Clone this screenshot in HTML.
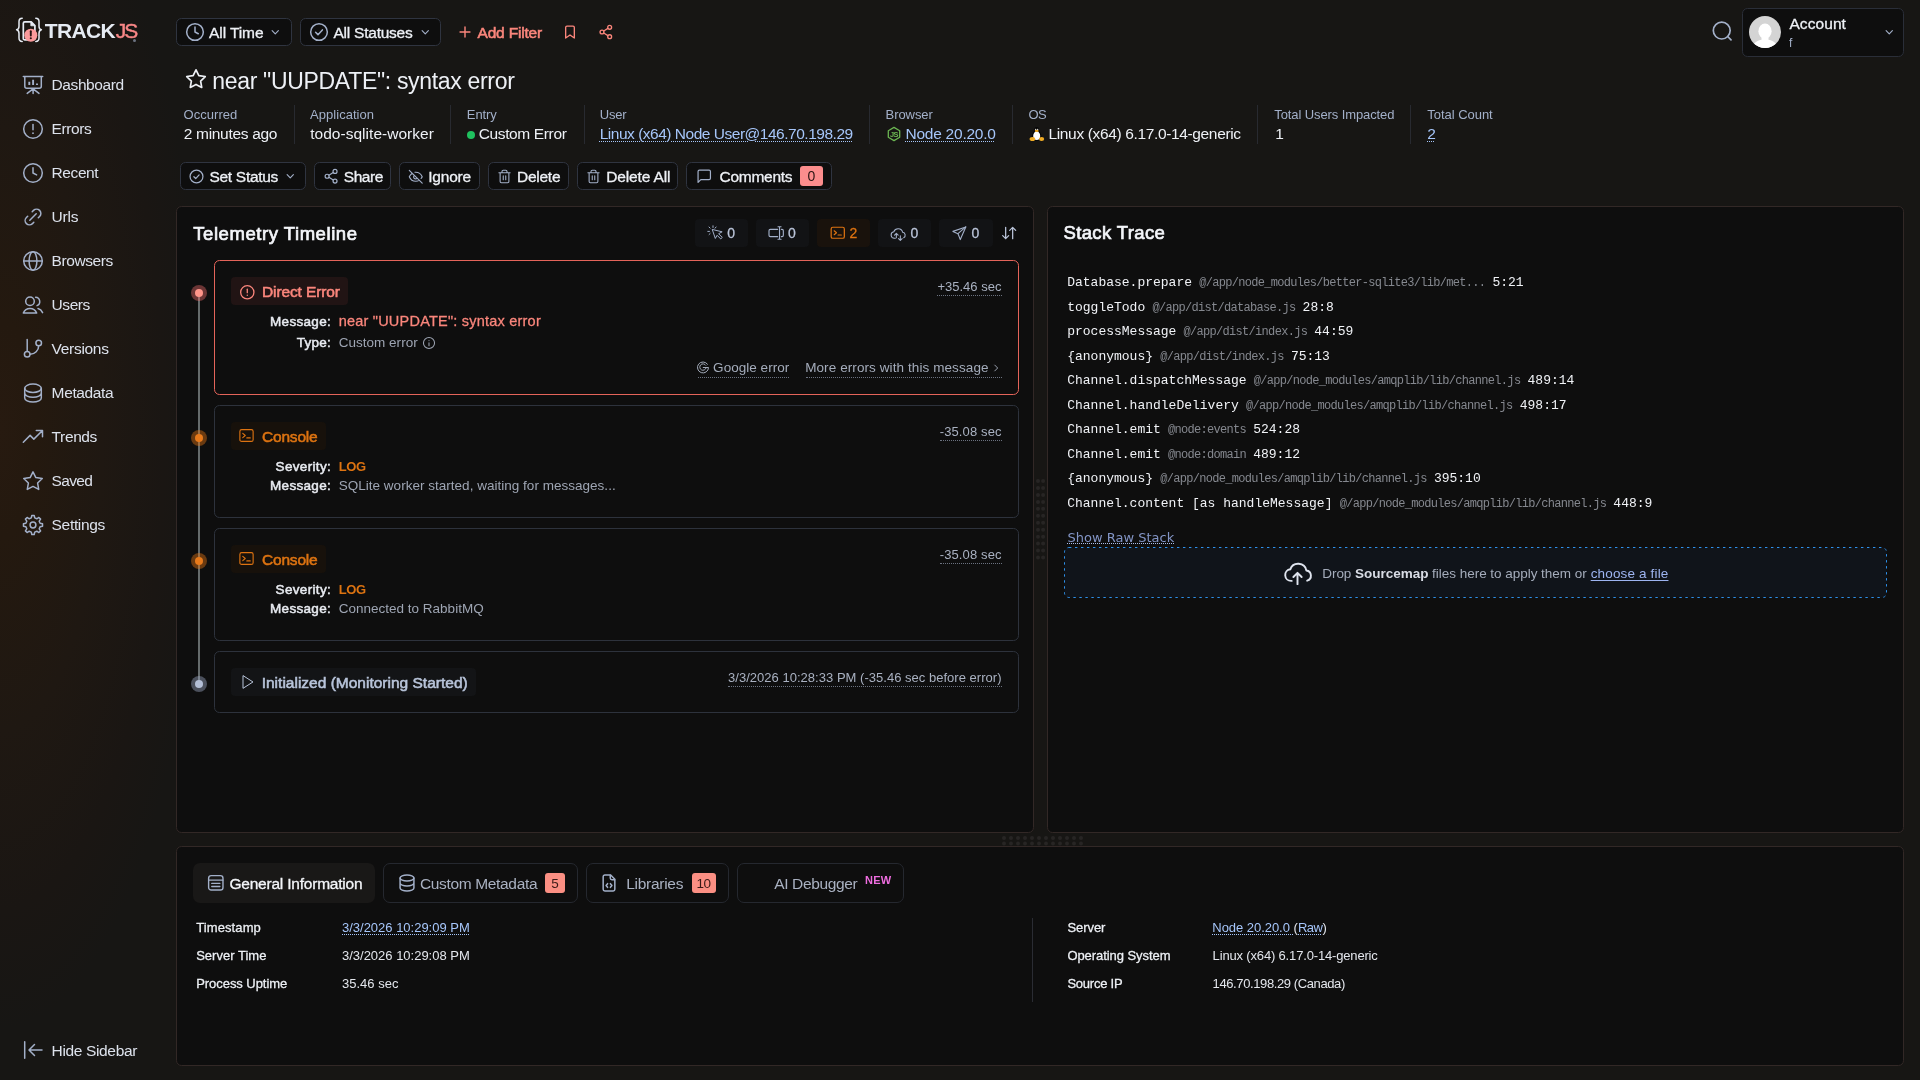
<!DOCTYPE html>
<html lang="en">
<head>
<meta charset="utf-8">
<title>near "UUPDATE": syntax error - TrackJS</title>
<style>
*{box-sizing:border-box;margin:0;padding:0}
html,body{width:1920px;height:1080px;overflow:hidden}
body{background:#171614;color:#eef1f6;font-family:"Liberation Sans",sans-serif;font-size:15px;position:relative}
#bg{position:absolute;left:0;top:0;width:1920px;height:1080px;background:radial-gradient(ellipse 205px 600px at 0px 430px,#271a10 0%,#24190f 18%,#1f1812 50%,#1a1613 80%,#171614 100%)}
.abs{position:absolute}
.t{position:absolute;white-space:nowrap}
svg{display:block;position:absolute;overflow:visible}
.ic{fill:none;stroke:currentColor;stroke-linecap:round;stroke-linejoin:round}
.btn{position:absolute;border:1px solid #2f3440;background:#0e0e0e;border-radius:5.5px}
.du{text-decoration:underline dotted;text-decoration-thickness:1px;text-underline-offset:2px}
.vdiv{position:absolute;width:1px;background:#282a30}
.panel{position:absolute;background:#0e0e0e;border:1px solid #322826;border-radius:5.5px}
.card{position:absolute;border:1px solid #2d323c;border-radius:5.5px}
.chip{position:absolute;border-radius:4px;background:#141518}
</style>
</head>
<body>
<div id="bg"></div>
<div id="app" style="position:absolute;left:0;top:0;width:1920px;height:1080px;will-change:transform">
<nav aria-label="Sidebar">
<svg style="left:14px;top:15px" width="32" height="30" viewBox="0 0 32 30" fill="none" stroke-linecap="round" stroke-linejoin="round"><path d="M8.2 3.2C5.6 3.2 5 4.6 5 6.6v4.6c0 2-.8 3.2-2.4 3.6C4.2 15.200 5 16.400 5 18.400V23c0 2 .6 3.400 3.200 3.400" stroke="#e6ebf3" stroke-width="1.5"/><path d="M21.800 3.2c2.600 0 3.200 1.400 3.200 3.400v4.600c0 2 .8 3.200 2.400 3.600-1.600.4-2.400 1.600-2.400 3.600V23c0 2-.6 3.400-3.200 3.400" stroke="#e6ebf3" stroke-width="1.5"/><path d="M9.300 23.400V8.300a1.500 1.500 0 0 1 1.500-1.500h6.400l3.700 3.700v12.900a1.500 1.500 0 0 1-1.500 1.500H10.800a1.500 1.500 0 0 1-1.500-1.500z" stroke="#e6ebf3" stroke-width="1.700"/><path d="M16.800 7v3.800h3.900z" fill="#e6ebf3" stroke="#e6ebf3" stroke-width=".8"/><circle cx="16.800" cy="20.200" r="6.500" fill="#fb9a9b"/><path d="M16.800 16.200v4.300" stroke="#2a1513" stroke-width="1.900"/><circle cx="16.800" cy="23.300" r="1.050" fill="#2a1513"/></svg>
<span class="t" style="font-size:21px;line-height:23px;color:#e6ebf3;top:19px;font-weight:bold;letter-spacing:-0.640px;left:44.70px;">TRACK</span>
<span class="t" style="font-size:21px;line-height:23px;color:#f98787;top:19px;-webkit-text-stroke:0.42px currentColor;letter-spacing:-2.008px;left:115.80px;">JS</span>
<div class="abs" style="left:132.6px;top:38.6px;width:3px;height:3px;border-radius:50%;background:#6b7280"></div>
<span class="t" style="font-size:15.5px;line-height:17px;color:#dde2ec;top:76px;letter-spacing:-0.414px;left:51.60px;">Dashboard</span>
<span class="t" style="font-size:15.5px;line-height:17px;color:#dde2ec;top:120px;letter-spacing:-0.401px;left:51.60px;">Errors</span>
<span class="t" style="font-size:15.5px;line-height:17px;color:#dde2ec;top:164px;letter-spacing:-0.421px;left:51.60px;">Recent</span>
<span class="t" style="font-size:15.5px;line-height:17px;color:#dde2ec;top:208px;letter-spacing:-0.216px;left:51.60px;">Urls</span>
<span class="t" style="font-size:15.5px;line-height:17px;color:#dde2ec;top:252px;letter-spacing:-0.414px;left:51.60px;">Browsers</span>
<span class="t" style="font-size:15.5px;line-height:17px;color:#dde2ec;top:296px;letter-spacing:-0.437px;left:51.60px;">Users</span>
<span class="t" style="font-size:15.5px;line-height:17px;color:#dde2ec;top:340px;letter-spacing:-0.307px;left:51.60px;">Versions</span>
<span class="t" style="font-size:15.5px;line-height:17px;color:#dde2ec;top:384px;letter-spacing:-0.368px;left:51.60px;">Metadata</span>
<span class="t" style="font-size:15.5px;line-height:17px;color:#dde2ec;top:428px;letter-spacing:-0.379px;left:51.60px;">Trends</span>
<span class="t" style="font-size:15.5px;line-height:17px;color:#dde2ec;top:472px;letter-spacing:-0.671px;left:51.60px;">Saved</span>
<span class="t" style="font-size:15.5px;line-height:17px;color:#dde2ec;top:516px;letter-spacing:-0.327px;left:51.60px;">Settings</span>
<span class="t" style="font-size:15.5px;line-height:17px;color:#dde2ec;top:1042px;letter-spacing:-0.351px;left:51.60px;">Hide Sidebar</span>
<svg class="ic" style="left:21px;top:72.6px;color:#a3b0c9;stroke-width:1.5" width="24" height="24" viewBox="0 0 24 24"><path d="M2.300 3.600h19.400M3.800 3.600v9.700a2 2 0 0 0 2 2h12.500a2 2 0 0 0 2-2V3.600M12.100 15.300v5.200M12.100 15.800l-5.900 4.600M12.100 15.800l5.900 4.600"/><path d="M8.300 8.800v3.200M12.100 6.800v5.200M16 10.600v1.400" stroke-width="1.900" stroke-linecap="butt"/></svg>
<svg class="ic" style="left:21px;top:116.6px;color:#a3b0c9;stroke-width:1.5" width="24" height="24" viewBox="0 0 24 24"><circle cx="12" cy="12" r="9.300"/><path d="M12 7.500v5.300"/><circle cx="12" cy="16.200" r=".9" fill="currentColor" stroke="none"/></svg>
<svg class="ic" style="left:21px;top:160.6px;color:#a3b0c9;stroke-width:1.5" width="24" height="24" viewBox="0 0 24 24"><circle cx="12" cy="12" r="9.300"/><path d="M12 6.800V12l3.600 1.900"/></svg>
<svg class="ic" style="left:21px;top:204.6px;color:#a3b0c9;stroke-width:1.5" width="24" height="24" viewBox="0 0 24 24"><path d="M8.800 15.200l6.400-6.400M11.200 6.700l1.300-1.300a4.300 4.300 0 0 1 6.100 6.100l-1.300 1.300M12.800 17.300l-1.300 1.300a4.300 4.300 0 0 1-6.100-6.100l1.300-1.300"/></svg>
<svg class="ic" style="left:21px;top:248.6px;color:#a3b0c9;stroke-width:1.5" width="24" height="24" viewBox="0 0 24 24"><circle cx="12" cy="12" r="9.300"/><path d="M2.700 12h18.600"/><ellipse cx="12" cy="12" rx="3.900" ry="9.300"/></svg>
<svg class="ic" style="left:21px;top:292.6px;color:#a3b0c9;stroke-width:1.5" width="24" height="24" viewBox="0 0 24 24"><circle cx="9" cy="8.300" r="4.300"/><path d="M2.300 20c1.300-3 3.800-4.600 6.700-4.600s5.400 1.600 6.700 4.600zM14.600 4.300a4.300 4.300 0 0 1 1.400 8.300M17 15.600c2 .5 3.600 1.900 4.600 4"/></svg>
<svg class="ic" style="left:21px;top:336.6px;color:#a3b0c9;stroke-width:1.5" width="24" height="24" viewBox="0 0 24 24"><path d="M6.200 2.500v11.800"/><circle cx="6.200" cy="17.300" r="2.800"/><circle cx="17.700" cy="6" r="2.800"/><path d="M17.700 8.800c0 4.700-3.800 8.500-8.600 8.500"/></svg>
<svg class="ic" style="left:21px;top:380.6px;color:#a3b0c9;stroke-width:1.5" width="24" height="24" viewBox="0 0 24 24"><ellipse cx="12" cy="7.300" rx="8.300" ry="4.200"/><path d="M3.700 7.300v9.600c0 2.300 3.700 4.200 8.300 4.200s8.300-1.900 8.300-4.200V7.300M3.700 12.100c0 2.300 3.700 4.200 8.300 4.200s8.300-1.900 8.300-4.200"/></svg>
<svg class="ic" style="left:21px;top:424.6px;color:#a3b0c9;stroke-width:1.5" width="24" height="24" viewBox="0 0 24 24"><path d="M2.300 17.200l6.800-6.800 3.700 3.700 8.700-8.600M15.300 5.500h6.200v6.200"/></svg>
<svg class="ic" style="left:21px;top:468.6px;color:#a3b0c9;stroke-width:1.5" width="24" height="24" viewBox="0 0 24 24"><path d="M12 2.800l2.850 5.800 6.400.93-4.630 4.500 1.100 6.370L12 17.400l-5.720 3 1.100-6.370-4.630-4.500 6.400-.93z"/></svg>
<svg class="ic" style="left:21px;top:512.6px;color:#a3b0c9;stroke-width:1.5" width="24" height="24" viewBox="0 0 24 24"><path d="M10.30 4.90 L10.80 2.48 L13.20 2.48 L13.70 4.90 L15.81 5.78 L17.88 4.41 L19.59 6.12 L18.22 8.19 L19.10 10.30 L21.52 10.80 L21.52 13.20 L19.10 13.70 L18.22 15.81 L19.59 17.88 L17.88 19.59 L15.81 18.22 L13.70 19.10 L13.20 21.52 L10.80 21.52 L10.30 19.10 L8.19 18.22 L6.12 19.59 L4.41 17.88 L5.78 15.81 L4.90 13.70 L2.48 13.20 L2.48 10.80 L4.90 10.30 L5.78 8.19 L4.41 6.12 L6.12 4.41 L8.19 5.78z"/><circle cx="12" cy="12" r="2.900"/></svg>
<svg class="ic" style="left:21px;top:1038px;color:#a3b0c9;stroke-width:1.5" width="24" height="24" viewBox="0 0 24 24"><path d="M3.700 3.800v16.400M21 12H8.500M13.500 6.500L8 12l5.500 5.500"/></svg>
</nav>
<header aria-label="Filters">
<div class="btn" style="left:176px;top:18px;width:116px;height:28px"></div>
<svg class="ic" style="left:183.6px;top:21px;color:#a3b0c9;stroke-width:1.65" width="22" height="22" viewBox="0 0 24 24"><circle cx="12" cy="12" r="9.100"/><path d="M12 6.500V12l3.600 1.900"/></svg>
<span class="t" style="font-size:15.5px;line-height:17px;color:#eef1f6;top:24px;-webkit-text-stroke:0.31px currentColor;letter-spacing:-0.078px;left:209.00px;">All Time</span>
<svg class="ic" style="left:269px;top:26px;color:#a3b0c9;stroke-width:2.2" width="12.5" height="12.5" viewBox="0 0 24 24"><path d="M6 9l6 6 6-6"/></svg>
<div class="btn" style="left:300px;top:18px;width:141px;height:28px"></div>
<svg class="ic" style="left:308px;top:21px;color:#a3b0c9;stroke-width:1.65" width="22" height="22" viewBox="0 0 24 24"><circle cx="12" cy="12" r="9.100"/><path d="M8.300 12.300l2.600 2.600 4.800-5.200"/></svg>
<span class="t" style="font-size:15.5px;line-height:17px;color:#eef1f6;top:24px;-webkit-text-stroke:0.31px currentColor;letter-spacing:-0.238px;left:333.50px;">All Statuses</span>
<svg class="ic" style="left:418.5px;top:26px;color:#a3b0c9;stroke-width:2.2" width="12.5" height="12.5" viewBox="0 0 24 24"><path d="M6 9l6 6 6-6"/></svg>
<svg class="ic" style="left:458px;top:25px;color:#fb867c;stroke-width:2.4" width="14" height="14" viewBox="0 0 24 24"><path d="M12 3.500v17M3.500 12h17"/></svg>
<span class="t" style="font-size:15.5px;line-height:17px;color:#fb867c;top:24px;-webkit-text-stroke:0.57px currentColor;letter-spacing:-0.184px;left:477.50px;">Add Filter</span>
<svg class="ic" style="left:562px;top:24px;color:#fb867c;stroke-width:2" width="16" height="16" viewBox="0 0 24 24"><path d="M18.500 21l-6.500-4.600L5.500 21V5.200a2 2 0 0 1 2-2h9a2 2 0 0 1 2 2z"/></svg>
<svg class="ic" style="left:597.5px;top:24px;color:#fb867c;stroke-width:2" width="16" height="16" viewBox="0 0 24 24"><circle cx="17.500" cy="5" r="2.900"/><circle cx="6" cy="12" r="2.900"/><circle cx="17.500" cy="19" r="2.900"/><path d="M8.600 13.500l6.300 3.900M14.900 6.600l-6.300 3.900"/></svg>
<svg class="ic" style="left:1710.5px;top:19.5px;color:#a3b0c9;stroke-width:1.75" width="23" height="23" viewBox="0 0 24 24"><circle cx="11.200" cy="11" r="8.800"/><path d="M20.900 20.700l-3.500-3.500"/></svg>
<div class="btn" style="left:1742px;top:8px;width:162px;height:49px;border-color:#2a2e38"></div>
<svg style="left:1749px;top:16px" width="32" height="32" viewBox="0 0 32 32"><defs><clipPath id="av"><circle cx="16" cy="16" r="16"/></clipPath></defs><circle cx="16" cy="16" r="16" fill="#d4d4d4"/><g clip-path="url(#av)" fill="#ffffff"><ellipse cx="16" cy="15.200" rx="6.600" ry="7.600"/><path d="M12.500 20h7v4.500h-7z"/><path d="M3.500 33c0-6 5-9.500 12.500-9.500S28.500 27 28.500 33z"/></g></svg>
<span class="t" style="font-size:15.5px;line-height:17px;color:#eef1f6;top:15px;-webkit-text-stroke:0.31px currentColor;letter-spacing:0.083px;left:1789.40px;">Account</span>
<span class="t" style="font-size:12px;line-height:14px;color:#a3b0c9;top:36px;left:1789.00px;">f</span>
<svg class="ic" style="left:1883px;top:26px;color:#a3b0c9;stroke-width:2.2" width="12.5" height="12.5" viewBox="0 0 24 24"><path d="M6 9l6 6 6-6"/></svg>
</header>
<main>
<section aria-label="Error summary">
<svg class="ic" style="left:183.5px;top:66.7px;color:#eef1f6;stroke-width:1.7" width="24" height="24" viewBox="0 0 24 24"><path d="M12 2.800l2.850 5.800 6.400.93-4.630 4.500 1.100 6.370L12 17.400l-5.720 3 1.100-6.370-4.630-4.500 6.400-.93z"/></svg>
<span class="t" style="font-size:23px;line-height:26px;color:#eef1f6;top:68px;letter-spacing:-0.318px;left:212.25px;">near "UUPDATE": syntax error</span>
<span class="t" style="font-size:13px;line-height:15px;color:#a3b0c9;top:107px;letter-spacing:0.035px;left:183.55px;">Occurred</span>
<span class="t" style="font-size:15.5px;line-height:17px;color:#eef1f6;top:125px;letter-spacing:-0.298px;left:183.70px;">2 minutes ago</span>
<span class="t" style="font-size:13px;line-height:15px;color:#a3b0c9;top:107px;letter-spacing:0.036px;left:310.05px;">Application</span>
<span class="t" style="font-size:15.5px;line-height:17px;color:#eef1f6;top:125px;letter-spacing:0.031px;left:310.20px;">todo-sqlite-worker</span>
<span class="t" style="font-size:13px;line-height:15px;color:#a3b0c9;top:107px;letter-spacing:-0.069px;left:466.80px;">Entry</span>
<span class="t" style="font-size:15.5px;line-height:17px;color:#eef1f6;top:125px;letter-spacing:-0.367px;left:478.70px;">Custom Error</span>
<div class="abs" style="left:467px;top:131px;width:8px;height:8px;border-radius:50%;background:#1fc15e"></div>
<span class="t" style="font-size:13px;line-height:15px;color:#a3b0c9;top:107px;letter-spacing:-0.238px;left:599.80px;">User</span>
<span class="t du" style="font-size:15.5px;line-height:17px;color:#a6c6fa;top:125px;letter-spacing:-0.484px;left:599.70px;">Linux (x64) Node User@146.70.198.29</span>
<span class="t" style="font-size:13px;line-height:15px;color:#a3b0c9;top:107px;letter-spacing:-0.062px;left:885.55px;">Browser</span>
<span class="t du" style="font-size:15.5px;line-height:17px;color:#a6c6fa;top:125px;letter-spacing:-0.236px;left:905.45px;">Node 20.20.0</span>
<span class="t" style="font-size:13px;line-height:15px;color:#a3b0c9;top:107px;letter-spacing:-0.773px;left:1028.55px;">OS</span>
<span class="t" style="font-size:15.5px;line-height:17px;color:#eef1f6;top:125px;letter-spacing:-0.355px;left:1048.50px;">Linux (x64) 6.17.0-14-generic</span>
<span class="t" style="font-size:13px;line-height:15px;color:#a3b0c9;top:107px;letter-spacing:-0.105px;left:1274.30px;">Total Users Impacted</span>
<span class="t" style="font-size:15.5px;line-height:17px;color:#eef1f6;top:125px;left:1275.20px;">1</span>
<span class="t" style="font-size:13px;line-height:15px;color:#a3b0c9;top:107px;letter-spacing:-0.033px;left:1427.30px;">Total Count</span>
<span class="t du" style="font-size:15.5px;line-height:17px;color:#a6c6fa;top:125px;left:1427.20px;">2</span>
<div class="vdiv" style="left:294px;top:105px;height:39px"></div>
<div class="vdiv" style="left:450px;top:105px;height:39px"></div>
<div class="vdiv" style="left:584px;top:105px;height:39px"></div>
<div class="vdiv" style="left:869px;top:105px;height:39px"></div>
<div class="vdiv" style="left:1012px;top:105px;height:39px"></div>
<div class="vdiv" style="left:1257px;top:105px;height:39px"></div>
<div class="vdiv" style="left:1410px;top:105px;height:39px"></div>
<svg style="left:886px;top:126px" width="16" height="16" viewBox="0 0 16 16"><path d="M8 1.400l5.700 3.300v6.600L8 14.600 2.300 11.300V4.700z" fill="none" stroke="#6cb652" stroke-width="1.300" stroke-linejoin="round"/><text x="3.900" y="10.900" font-family="Liberation Sans, sans-serif" font-size="7.400" font-weight="bold" letter-spacing="-.5" fill="#6cb652">JS</text></svg>
<svg style="left:1028px;top:126px" width="18" height="16" viewBox="0 0 18 16"><path d="M8.700 1c1.600 0 2.400 1.300 2.400 2.900 0 1.500 2.600 4.400 2.600 7.200 0 2.300-2 3.700-5 3.700s-5-1.400-5-3.700c0-2.800 2.600-5.700 2.600-7.200C6.300 2.300 7.100 1 8.700 1z" fill="#060606"/><ellipse cx="8.700" cy="10" rx="3.500" ry="3.900" fill="#ffffff"/><ellipse cx="8.700" cy="6.800" rx="2.200" ry="1.600" fill="#ffffff"/><ellipse cx="8.700" cy="4.900" rx="2" ry="1.150" fill="#eaa51e"/><circle cx="7.700" cy="3.300" r=".65" fill="#fff"/><circle cx="9.700" cy="3.300" r=".65" fill="#fff"/><ellipse cx="4.400" cy="13" rx="2.800" ry="2.100" fill="#f0ac25"/><ellipse cx="13.600" cy="13" rx="2.600" ry="2" fill="#f0ac25"/></svg>
<div class="btn" style="left:180px;top:162px;width:126px;height:28px"></div>
<svg class="ic" style="left:188.4px;top:167.7px;color:#a3b0c9;stroke-width:1.75" width="17" height="17" viewBox="0 0 24 24"><circle cx="12" cy="12" r="9.100"/><path d="M8.300 12.300l2.600 2.600 4.800-5.200"/></svg>
<span class="t" style="font-size:15.5px;line-height:17px;color:#eef1f6;top:168px;-webkit-text-stroke:0.31px currentColor;letter-spacing:-0.302px;left:209.50px;">Set Status</span>
<svg class="ic" style="left:283.5px;top:170px;color:#a3b0c9;stroke-width:2.2" width="12.5" height="12.5" viewBox="0 0 24 24"><path d="M6 9l6 6 6-6"/></svg>
<div class="btn" style="left:314px;top:162px;width:77px;height:28px"></div>
<svg class="ic" style="left:323px;top:168px;color:#a3b0c9;stroke-width:1.75" width="16.5" height="16.5" viewBox="0 0 24 24"><circle cx="17.500" cy="5" r="2.900"/><circle cx="6" cy="12" r="2.900"/><circle cx="17.500" cy="19" r="2.900"/><path d="M8.600 13.500l6.300 3.900M14.900 6.600l-6.300 3.900"/></svg>
<span class="t" style="font-size:15.5px;line-height:17px;color:#eef1f6;top:168px;-webkit-text-stroke:0.31px currentColor;letter-spacing:-0.425px;left:343.75px;">Share</span>
<div class="btn" style="left:399px;top:162px;width:81px;height:28px"></div>
<svg class="ic" style="left:408px;top:168.5px;color:#a3b0c9;stroke-width:1.75" width="15.5" height="15.5" viewBox="0 0 24 24"><path d="M9.900 9.900a3 3 0 1 0 4.200 4.200M10.700 5.100A10.400 10.400 0 0 1 12 5c7 0 10 7 10 7a13.200 13.200 0 0 1-1.700 2.700M6.600 6.600A13.500 13.500 0 0 0 2 12s3 7 10 7a9.700 9.700 0 0 0 5.400-1.600M2 2l20 20"/></svg>
<span class="t" style="font-size:15.5px;line-height:17px;color:#eef1f6;top:168px;-webkit-text-stroke:0.31px currentColor;letter-spacing:-0.201px;left:428.25px;">Ignore</span>
<div class="btn" style="left:488px;top:162px;width:81px;height:28px"></div>
<svg class="ic" style="left:496.75px;top:168.75px;color:#a3b0c9;stroke-width:1.75" width="15" height="15" viewBox="0 0 24 24"><path d="M3 6h18M19 6v14c0 1-1 2-2 2H7c-1 0-2-1-2-2V6M8 6V4c0-1 1-2 2-2h4c1 0 2 1 2 2v2M10 11v6M14 11v6"/></svg>
<span class="t" style="font-size:15.5px;line-height:17px;color:#eef1f6;top:168px;-webkit-text-stroke:0.31px currentColor;letter-spacing:-0.260px;left:517.00px;">Delete</span>
<div class="btn" style="left:577px;top:162px;width:101px;height:28px"></div>
<svg class="ic" style="left:586px;top:168.75px;color:#a3b0c9;stroke-width:1.75" width="15" height="15" viewBox="0 0 24 24"><path d="M3 6h18M19 6v14c0 1-1 2-2 2H7c-1 0-2-1-2-2V6M8 6V4c0-1 1-2 2-2h4c1 0 2 1 2 2v2M10 11v6M14 11v6"/></svg>
<span class="t" style="font-size:15.5px;line-height:17px;color:#eef1f6;top:168px;-webkit-text-stroke:0.31px currentColor;letter-spacing:-0.148px;left:606.25px;">Delete All</span>
<div class="btn" style="left:686px;top:162px;width:146px;height:28px"></div>
<svg class="ic" style="left:695.5px;top:168px;color:#a3b0c9;stroke-width:1.75" width="16.5" height="16.5" viewBox="0 0 24 24"><path d="M21 15a2 2 0 0 1-2 2H7l-4 4V5a2 2 0 0 1 2-2h14a2 2 0 0 1 2 2z"/></svg>
<span class="t" style="font-size:15.5px;line-height:17px;color:#eef1f6;top:168px;-webkit-text-stroke:0.31px currentColor;letter-spacing:-0.273px;left:719.50px;">Comments</span>
<div class="abs" style="left:800px;top:166px;width:23px;height:20px;border-radius:3px;background:#fb8d8d"></div>
<span class="t" style="font-size:14px;line-height:16px;color:#2a1513;top:168px;left:807.50px;">0</span>
</section>
<svg style="left:1035.9px;top:479.2px" width="9" height="80" fill="#272524"><circle cx="2.0" cy="2.0" r="2"/><circle cx="7.1" cy="2.0" r="2"/><circle cx="2.0" cy="9.0" r="2"/><circle cx="7.1" cy="9.0" r="2"/><circle cx="2.0" cy="15.9" r="2"/><circle cx="7.1" cy="15.9" r="2"/><circle cx="2.0" cy="22.9" r="2"/><circle cx="7.1" cy="22.9" r="2"/><circle cx="2.0" cy="29.8" r="2"/><circle cx="7.1" cy="29.8" r="2"/><circle cx="2.0" cy="36.8" r="2"/><circle cx="7.1" cy="36.8" r="2"/><circle cx="2.0" cy="43.8" r="2"/><circle cx="7.1" cy="43.8" r="2"/><circle cx="2.0" cy="50.7" r="2"/><circle cx="7.1" cy="50.7" r="2"/><circle cx="2.0" cy="57.7" r="2"/><circle cx="7.1" cy="57.7" r="2"/><circle cx="2.0" cy="64.6" r="2"/><circle cx="7.1" cy="64.6" r="2"/><circle cx="2.0" cy="71.6" r="2"/><circle cx="7.1" cy="71.6" r="2"/><circle cx="2.0" cy="78.6" r="2"/><circle cx="7.1" cy="78.6" r="2"/></svg>
<svg style="left:1001.5px;top:835.5px" width="81" height="9" fill="#272524"><circle cx="2.0" cy="2.0" r="2"/><circle cx="9.0" cy="2.0" r="2"/><circle cx="16.0" cy="2.0" r="2"/><circle cx="23.0" cy="2.0" r="2"/><circle cx="30.0" cy="2.0" r="2"/><circle cx="37.0" cy="2.0" r="2"/><circle cx="44.0" cy="2.0" r="2"/><circle cx="51.0" cy="2.0" r="2"/><circle cx="58.0" cy="2.0" r="2"/><circle cx="65.0" cy="2.0" r="2"/><circle cx="72.0" cy="2.0" r="2"/><circle cx="79.0" cy="2.0" r="2"/><circle cx="2.0" cy="7.4" r="2"/><circle cx="9.0" cy="7.4" r="2"/><circle cx="16.0" cy="7.4" r="2"/><circle cx="23.0" cy="7.4" r="2"/><circle cx="30.0" cy="7.4" r="2"/><circle cx="37.0" cy="7.4" r="2"/><circle cx="44.0" cy="7.4" r="2"/><circle cx="51.0" cy="7.4" r="2"/><circle cx="58.0" cy="7.4" r="2"/><circle cx="65.0" cy="7.4" r="2"/><circle cx="72.0" cy="7.4" r="2"/><circle cx="79.0" cy="7.4" r="2"/></svg>
<section aria-label="Telemetry Timeline">
<div class="panel" style="left:176px;top:206px;width:858px;height:627px"></div>
<span class="t" style="font-size:18.5px;line-height:21px;color:#f4f6fa;top:223px;-webkit-text-stroke:0.68px currentColor;letter-spacing:0.557px;left:193.25px;">Telemetry Timeline</span>
<div class="chip" style="left:695px;top:219px;width:53px;height:28px;background:#121315"></div>
<div class="chip" style="left:756px;top:219px;width:53px;height:28px;background:#121315"></div>
<div class="chip" style="left:817px;top:219px;width:53px;height:28px;background:#19120c"></div>
<div class="chip" style="left:878px;top:219px;width:53px;height:28px;background:#121315"></div>
<div class="chip" style="left:939px;top:219px;width:54px;height:28px;background:#121315"></div>
<svg class="ic" style="left:706.5px;top:225px;color:#a3b0c9;stroke-width:1.5" width="16" height="16" viewBox="0 0 24 24"><path d="M8 7.200l4.500 13 2.600-4.800 5.500 5.500 2.300-2.300-5.500-5.500 4.800-2.600z"/><path d="M9 1.200v2.500M3 3l1.700 1.700M1.200 9.600h2.500M13.600 3l-1.500 1.800M3.100 14.300l1.600-1.600"/></svg>
<span class="t" style="font-size:14px;line-height:16px;color:#bac4d9;top:225px;-webkit-text-stroke:0.28px currentColor;left:727.20px;">0</span>
<svg class="ic" style="left:768px;top:225.2px;color:#a3b0c9;stroke-width:1.7" width="16" height="16" viewBox="0 0 24 24"><path d="M14.500 6.500H3.500a2 2 0 0 0-2 2v7a2 2 0 0 0 2 2h11M20 6.500h1a2 2 0 0 1 2 2v7a2 2 0 0 1-2 2h-1"/><path d="M17.300 2.800v18.400M15 2.600h4.600M15 21.400h4.600"/></svg>
<span class="t" style="font-size:14px;line-height:16px;color:#bac4d9;top:225px;-webkit-text-stroke:0.28px currentColor;left:788.10px;">0</span>
<svg class="ic" style="left:829.5px;top:225px;color:#dd7311;stroke-width:1.9" width="15.5" height="15.5" viewBox="0 0 24 24"><rect x="1.800" y="3.500" width="20.400" height="17" rx="2.500"/><path d="M6.500 9l3.500 3-3.500 3M12.500 15.500h5"/></svg>
<span class="t" style="font-size:14px;line-height:16px;color:#dd7311;top:225px;-webkit-text-stroke:0.28px currentColor;left:849.50px;">2</span>
<svg class="ic" style="left:890px;top:225.5px;color:#a3b0c9;stroke-width:1.6" width="16" height="16" viewBox="0 0 24 24"><path d="M8 18.500H6.500a5 5 0 0 1-.8-9.900A7 7 0 0 1 19 9.500a4.300 4.300 0 0 1 1.600 8"/><path d="M9.500 17.500v-6M6.800 13.800l2.700-2.700 2.700 2.700M15.500 14.500v7M12.800 18.800l2.700 2.700 2.700-2.700"/></svg>
<span class="t" style="font-size:14px;line-height:16px;color:#bac4d9;top:225px;-webkit-text-stroke:0.28px currentColor;left:910.40px;">0</span>
<svg class="ic" style="left:951px;top:224.8px;color:#a3b0c9;stroke-width:1.6" width="16.5" height="16.5" viewBox="0 0 24 24"><path d="M21.500 2.800L2.800 9.300l7.300 3.300 3.400 8.600z"/><path d="M21.500 2.800L10.100 12.600"/></svg>
<span class="t" style="font-size:14px;line-height:16px;color:#bac4d9;top:225px;-webkit-text-stroke:0.28px currentColor;left:971.50px;">0</span>
<svg class="ic" style="left:1000.5px;top:225px;color:#bac4d9;stroke-width:1.9" width="16" height="16" viewBox="0 0 24 24"><path d="M7 3.500v17M2.500 16l4.500 4.500 4.500-4.500M17.500 20.500v-17M13 8l4.500-4.500L22 8"/></svg>
<div class="abs" style="left:198px;top:293px;width:2px;height:391px;background:#656b6c"></div>
<div class="abs" style="left:191px;top:285px;width:16px;height:16px;border-radius:50%;background:rgba(248,113,113,.4)"></div>
<div class="abs" style="left:195px;top:289px;width:8px;height:8px;border-radius:50%;background:#ff958a"></div>
<div class="abs" style="left:191px;top:429.5px;width:16px;height:16px;border-radius:50%;background:rgba(234,120,20,.42)"></div>
<div class="abs" style="left:195px;top:433.5px;width:8px;height:8px;border-radius:50%;background:#e77a1b"></div>
<div class="abs" style="left:191px;top:552.5px;width:16px;height:16px;border-radius:50%;background:rgba(234,120,20,.42)"></div>
<div class="abs" style="left:195px;top:556.5px;width:8px;height:8px;border-radius:50%;background:#e77a1b"></div>
<div class="abs" style="left:191px;top:675.5px;width:16px;height:16px;border-radius:50%;background:rgba(160,172,200,.42)"></div>
<div class="abs" style="left:195px;top:679.5px;width:8px;height:8px;border-radius:50%;background:#b4bfd6"></div>
<div class="card" style="left:214px;top:260px;width:805px;height:135px;border-color:#e4645a"></div>
<div class="card" style="left:214px;top:405px;width:805px;height:113px"></div>
<div class="card" style="left:214px;top:528px;width:805px;height:113px"></div>
<div class="card" style="left:214px;top:651px;width:805px;height:62px"></div>
<div class="chip" style="left:231px;top:277px;width:117px;height:28px;background:#211414"></div>
<svg class="ic" style="left:238.7px;top:283.7px;color:#fb867c;stroke-width:1.9" width="16.6" height="16.6" viewBox="0 0 24 24"><circle cx="12" cy="12" r="9.600"/><path d="M12 7.500v5"/><circle cx="12" cy="16.300" r="1" fill="currentColor" stroke="none"/></svg>
<span class="t" style="font-size:15.5px;line-height:17px;color:#fb867c;top:283px;-webkit-text-stroke:0.57px currentColor;letter-spacing:-0.124px;left:262.00px;">Direct Error</span>
<span class="t" style="font-size:13px;line-height:15px;color:#a9b1c1;top:279px;letter-spacing:0.013px;right:918.49px;border-bottom:1px dotted #6b7280;padding-bottom:1px;">+35.46 sec</span>
<span class="t" style="font-size:13.5px;line-height:15px;color:#e8ebf1;top:314px;-webkit-text-stroke:0.50px currentColor;letter-spacing:0.309px;right:1588.94px;">Message:</span>
<span class="t" style="font-size:14.5px;line-height:16px;color:#fb867c;top:313px;-webkit-text-stroke:0.29px currentColor;letter-spacing:0.217px;left:338.70px;">near "UUPDATE": syntax error</span>
<span class="t" style="font-size:13.5px;line-height:15px;color:#e8ebf1;top:335px;-webkit-text-stroke:0.50px currentColor;letter-spacing:0.244px;right:1589.01px;">Type:</span>
<span class="t" style="font-size:13.5px;line-height:15px;color:#9ea5b3;top:335px;letter-spacing:0.020px;left:338.70px;">Custom error</span>
<svg class="ic" style="left:421.7px;top:336px;color:#9ea5b3;stroke-width:1.8" width="14" height="14" viewBox="0 0 24 24"><circle cx="12" cy="12" r="9.500"/><path d="M12 16.500v-5M12 7.800v.1"/></svg>
<svg style="left:697px;top:360.5px" width="12" height="12" viewBox="0 0 24 24" fill="none" stroke="#a4acbb" stroke-width="2" stroke-linecap="round"><path d="M21 6.500A11 11 0 1 0 23 13H12.500"/><path d="M17.500 8.500A6.500 6.500 0 1 0 18.300 14"/></svg>
<span class="t" style="font-size:13.5px;line-height:15px;color:#a4acbb;top:360px;letter-spacing:0.034px;left:713.10px;">Google error</span>
<div class="abs" style="left:697.5px;top:377px;width:91.5px;height:1px;border-bottom:1px dotted #6b7280"></div>
<span class="t" style="font-size:13.5px;line-height:15px;color:#a4acbb;top:360px;letter-spacing:0.089px;left:805.20px;">More errors with this message</span>
<svg class="ic" style="left:990.5px;top:362.5px;color:#a4acbb;stroke-width:2.2" width="10" height="10" viewBox="0 0 24 24"><path d="M9 5l7 7-7 7"/></svg>
<div class="abs" style="left:806px;top:377px;width:195.5px;height:1px;border-bottom:1px dotted #6b7280"></div>
<div class="chip" style="left:231px;top:422px;width:95px;height:28px;background:#17110b"></div>
<svg class="ic" style="left:239.1px;top:428px;color:#dd7311;stroke-width:1.8" width="15" height="15" viewBox="0 0 24 24"><rect x="1.400" y="2.600" width="21.200" height="18.800" rx="2.800"/><path d="M6 8.500l4 3.500-4 3.500M12.500 15.800h5.500"/></svg>
<span class="t" style="font-size:15.5px;line-height:17px;color:#dd7311;top:428px;-webkit-text-stroke:0.57px currentColor;letter-spacing:-0.196px;left:262.00px;">Console</span>
<span class="t" style="font-size:13px;line-height:15px;color:#a9b1c1;top:424px;letter-spacing:0.120px;right:918.38px;border-bottom:1px dotted #6b7280;padding-bottom:1px;">-35.08 sec</span>
<span class="t" style="font-size:13.5px;line-height:15px;color:#e8ebf1;top:459px;-webkit-text-stroke:0.50px currentColor;letter-spacing:0.330px;right:1588.92px;">Severity:</span>
<span class="t" style="font-size:13px;line-height:15px;color:#dd7311;top:459px;font-weight:bold;letter-spacing:-0.391px;left:338.70px;">LOG</span>
<span class="t" style="font-size:13.5px;line-height:15px;color:#e8ebf1;top:478px;-webkit-text-stroke:0.50px currentColor;letter-spacing:0.309px;right:1588.94px;">Message:</span>
<span class="t" style="font-size:13.5px;line-height:15px;color:#9ea5b3;top:478px;letter-spacing:0.019px;left:338.70px;">SQLite worker started, waiting for messages...</span>
<div class="chip" style="left:231px;top:545px;width:95px;height:28px;background:#17110b"></div>
<svg class="ic" style="left:239.1px;top:551px;color:#dd7311;stroke-width:1.8" width="15" height="15" viewBox="0 0 24 24"><rect x="1.400" y="2.600" width="21.200" height="18.800" rx="2.800"/><path d="M6 8.500l4 3.500-4 3.500M12.500 15.800h5.500"/></svg>
<span class="t" style="font-size:15.5px;line-height:17px;color:#dd7311;top:551px;-webkit-text-stroke:0.57px currentColor;letter-spacing:-0.196px;left:262.00px;">Console</span>
<span class="t" style="font-size:13px;line-height:15px;color:#a9b1c1;top:547px;letter-spacing:0.120px;right:918.38px;border-bottom:1px dotted #6b7280;padding-bottom:1px;">-35.08 sec</span>
<span class="t" style="font-size:13.5px;line-height:15px;color:#e8ebf1;top:582px;-webkit-text-stroke:0.50px currentColor;letter-spacing:0.330px;right:1588.92px;">Severity:</span>
<span class="t" style="font-size:13px;line-height:15px;color:#dd7311;top:582px;font-weight:bold;letter-spacing:-0.391px;left:338.70px;">LOG</span>
<span class="t" style="font-size:13.5px;line-height:15px;color:#e8ebf1;top:601px;-webkit-text-stroke:0.50px currentColor;letter-spacing:0.309px;right:1588.94px;">Message:</span>
<span class="t" style="font-size:13.5px;line-height:15px;color:#9ea5b3;top:601px;letter-spacing:0.007px;left:338.70px;">Connected to RabbitMQ</span>
<div class="chip" style="left:231px;top:668px;width:245px;height:28px;background:#131416"></div>
<svg class="ic" style="left:239.5px;top:673.7px;color:#b8c4da;stroke-width:1.5" width="16" height="16" viewBox="0 0 24 24"><path d="M4.500 3v18.500l14.500-9.250z"/></svg>
<span class="t" style="font-size:15.5px;line-height:17px;color:#b8c4da;top:674px;-webkit-text-stroke:0.57px currentColor;letter-spacing:0.003px;left:261.70px;">Initialized (Monitoring Started)</span>
<span class="t" style="font-size:13px;line-height:15px;color:#a9b1c1;top:670px;letter-spacing:0.023px;right:918.48px;border-bottom:1px dotted #6b7280;padding-bottom:1px;">3/3/2026 10:28:33 PM (-35.46 sec before error)</span>
</section>
<section aria-label="Stack Trace">
<div class="panel" style="left:1047px;top:206px;width:857px;height:627px"></div>
<span class="t" style="font-size:18.5px;line-height:21px;color:#f4f6fa;top:222px;-webkit-text-stroke:0.68px currentColor;letter-spacing:0.369px;left:1063.45px;">Stack Trace</span>
<span class="t" style="font-size:13px;line-height:15px;color:#f1f3f7;top:275px;font-family:'Liberation Mono','DejaVu Sans Mono',monospace;left:1067.20px;">Database.prepare</span>
<span class="t" style="font-size:12px;line-height:14px;color:#85888f;top:276px;font-family:'Liberation Mono','DejaVu Sans Mono',monospace;letter-spacing:-0.700px;left:1199.23px;">@/app/node_modules/better-sqlite3/lib/met...</span>
<span class="t" style="font-size:13px;line-height:15px;color:#f1f3f7;top:275px;font-family:'Liberation Mono','DejaVu Sans Mono',monospace;left:1492.43px;">5:21</span>
<span class="t" style="font-size:13px;line-height:15px;color:#f1f3f7;top:300px;font-family:'Liberation Mono','DejaVu Sans Mono',monospace;left:1067.20px;">toggleTodo</span>
<span class="t" style="font-size:12px;line-height:14px;color:#85888f;top:301px;font-family:'Liberation Mono','DejaVu Sans Mono',monospace;letter-spacing:-0.700px;left:1152.42px;">@/app/dist/database.js</span>
<span class="t" style="font-size:13px;line-height:15px;color:#f1f3f7;top:300px;font-family:'Liberation Mono','DejaVu Sans Mono',monospace;left:1302.62px;">28:8</span>
<span class="t" style="font-size:13px;line-height:15px;color:#f1f3f7;top:324px;font-family:'Liberation Mono','DejaVu Sans Mono',monospace;left:1067.20px;">processMessage</span>
<span class="t" style="font-size:12px;line-height:14px;color:#85888f;top:325px;font-family:'Liberation Mono','DejaVu Sans Mono',monospace;letter-spacing:-0.700px;left:1183.62px;">@/app/dist/index.js</span>
<span class="t" style="font-size:13px;line-height:15px;color:#f1f3f7;top:324px;font-family:'Liberation Mono','DejaVu Sans Mono',monospace;left:1314.32px;">44:59</span>
<span class="t" style="font-size:13px;line-height:15px;color:#f1f3f7;top:349px;font-family:'Liberation Mono','DejaVu Sans Mono',monospace;left:1067.20px;">{anonymous}</span>
<span class="t" style="font-size:12px;line-height:14px;color:#85888f;top:350px;font-family:'Liberation Mono','DejaVu Sans Mono',monospace;letter-spacing:-0.700px;left:1160.22px;">@/app/dist/index.js</span>
<span class="t" style="font-size:13px;line-height:15px;color:#f1f3f7;top:349px;font-family:'Liberation Mono','DejaVu Sans Mono',monospace;left:1290.92px;">75:13</span>
<span class="t" style="font-size:13px;line-height:15px;color:#f1f3f7;top:373px;font-family:'Liberation Mono','DejaVu Sans Mono',monospace;left:1067.20px;">Channel.dispatchMessage</span>
<span class="t" style="font-size:12px;line-height:14px;color:#85888f;top:374px;font-family:'Liberation Mono','DejaVu Sans Mono',monospace;letter-spacing:-0.700px;left:1253.84px;">@/app/node_modules/amqplib/lib/channel.js</span>
<span class="t" style="font-size:13px;line-height:15px;color:#f1f3f7;top:373px;font-family:'Liberation Mono','DejaVu Sans Mono',monospace;left:1527.54px;">489:14</span>
<span class="t" style="font-size:13px;line-height:15px;color:#f1f3f7;top:398px;font-family:'Liberation Mono','DejaVu Sans Mono',monospace;left:1067.20px;">Channel.handleDelivery</span>
<span class="t" style="font-size:12px;line-height:14px;color:#85888f;top:399px;font-family:'Liberation Mono','DejaVu Sans Mono',monospace;letter-spacing:-0.700px;left:1246.04px;">@/app/node_modules/amqplib/lib/channel.js</span>
<span class="t" style="font-size:13px;line-height:15px;color:#f1f3f7;top:398px;font-family:'Liberation Mono','DejaVu Sans Mono',monospace;left:1519.74px;">498:17</span>
<span class="t" style="font-size:13px;line-height:15px;color:#f1f3f7;top:422px;font-family:'Liberation Mono','DejaVu Sans Mono',monospace;left:1067.20px;">Channel.emit</span>
<span class="t" style="font-size:12px;line-height:14px;color:#85888f;top:423px;font-family:'Liberation Mono','DejaVu Sans Mono',monospace;letter-spacing:-0.700px;left:1168.02px;">@node:events</span>
<span class="t" style="font-size:13px;line-height:15px;color:#f1f3f7;top:422px;font-family:'Liberation Mono','DejaVu Sans Mono',monospace;left:1253.22px;">524:28</span>
<span class="t" style="font-size:13px;line-height:15px;color:#f1f3f7;top:447px;font-family:'Liberation Mono','DejaVu Sans Mono',monospace;left:1067.20px;">Channel.emit</span>
<span class="t" style="font-size:12px;line-height:14px;color:#85888f;top:448px;font-family:'Liberation Mono','DejaVu Sans Mono',monospace;letter-spacing:-0.700px;left:1168.02px;">@node:domain</span>
<span class="t" style="font-size:13px;line-height:15px;color:#f1f3f7;top:447px;font-family:'Liberation Mono','DejaVu Sans Mono',monospace;left:1253.22px;">489:12</span>
<span class="t" style="font-size:13px;line-height:15px;color:#f1f3f7;top:471px;font-family:'Liberation Mono','DejaVu Sans Mono',monospace;left:1067.20px;">{anonymous}</span>
<span class="t" style="font-size:12px;line-height:14px;color:#85888f;top:472px;font-family:'Liberation Mono','DejaVu Sans Mono',monospace;letter-spacing:-0.700px;left:1160.22px;">@/app/node_modules/amqplib/lib/channel.js</span>
<span class="t" style="font-size:13px;line-height:15px;color:#f1f3f7;top:471px;font-family:'Liberation Mono','DejaVu Sans Mono',monospace;left:1433.92px;">395:10</span>
<span class="t" style="font-size:13px;line-height:15px;color:#f1f3f7;top:496px;font-family:'Liberation Mono','DejaVu Sans Mono',monospace;left:1067.20px;">Channel.content [as handleMessage]</span>
<span class="t" style="font-size:12px;line-height:14px;color:#85888f;top:497px;font-family:'Liberation Mono','DejaVu Sans Mono',monospace;letter-spacing:-0.700px;left:1339.65px;">@/app/node_modules/amqplib/lib/channel.js</span>
<span class="t" style="font-size:13px;line-height:15px;color:#f1f3f7;top:496px;font-family:'Liberation Mono','DejaVu Sans Mono',monospace;left:1613.35px;">448:9</span>
<span class="t du" style="font-size:13px;line-height:15px;color:#8395c6;top:530px;font-family:'DejaVu Sans','Liberation Sans',sans-serif;letter-spacing:0.004px;left:1067.50px;text-underline-offset:1px;text-decoration-color:#a9bbe8;">Show Raw Stack</span>
<svg style="left:1064px;top:547px" width="823" height="51"><rect x=".5" y=".5" width="822" height="50" rx="4.500" fill="#10141a" stroke="#2e90ea" stroke-width="1" stroke-dasharray="2.4 3.6"/></svg>
<svg class="ic" style="left:1281.8px;top:556.8px;color:#dfe4ee;stroke-width:1.5" width="31" height="31" viewBox="0 0 24 24"><path d="M7.500 18.500H7a4.500 4.500 0 0 1-.6-8.960A6.500 6.500 0 0 1 18.900 10.500a4 4 0 0 1 .6 7.800"/><path d="M12 21v-8.500M8.800 15.500l3.200-3.200 3.200 3.200"/></svg>
<span class="t" style="font-size:13.5px;line-height:15px;color:#a4acbb;top:566px;letter-spacing:-0.027px;left:1322.20px;">Drop <b style="color:#d8dce5">Sourcemap</b> files here to apply them or</span>
<span class="t" style="font-size:13.5px;line-height:15px;color:#9db4f0;top:566px;letter-spacing:0.153px;left:1590.70px;text-decoration:underline;text-underline-offset:2px;">choose a file</span>
</section>
<section aria-label="Details">
<div class="panel" style="left:176px;top:846px;width:1728px;height:220px"></div>
<div class="abs" style="left:193px;top:863px;width:182px;height:40px;border-radius:7px;background:#191817"></div>
<svg class="ic" style="left:207.2px;top:874.2px;color:#a3b0c9;stroke-width:1.9" width="17.6" height="17.6" viewBox="0 0 24 24"><rect x="2.200" y="2.200" width="19.600" height="19.600" rx="3.500"/><path d="M2.500 8.400h19M6.500 12.800h11M6.500 17h11"/></svg>
<span class="t" style="font-size:15.5px;line-height:17px;color:#f4f6fa;top:875px;-webkit-text-stroke:0.31px currentColor;letter-spacing:-0.211px;left:229.45px;">General Information</span>
<div class="abs" style="left:383px;top:863px;width:195px;height:40px;border-radius:7px;border:1px solid #25282f"></div>
<svg class="ic" style="left:396.5px;top:873px;color:#a3b0c9;stroke-width:1.8" width="20" height="20" viewBox="0 0 24 24"><ellipse cx="12" cy="6" rx="8.300" ry="3.600"/><path d="M3.700 6v12c0 2 3.700 3.600 8.300 3.600s8.300-1.600 8.300-3.600V6M3.700 12c0 2 3.700 3.600 8.300 3.600s8.300-1.600 8.300-3.600"/></svg>
<span class="t" style="font-size:15.5px;line-height:17px;color:#a9b1c1;top:875px;letter-spacing:-0.340px;left:419.95px;">Custom Metadata</span>
<div class="abs" style="left:545px;top:873px;width:20px;height:20px;border-radius:3px;background:#fb8f83"></div>
<span class="t" style="font-size:13.5px;line-height:15px;color:#3a1a16;top:876px;left:551.20px;">5</span>
<div class="abs" style="left:586px;top:863px;width:143px;height:40px;border-radius:7px;border:1px solid #25282f"></div>
<svg class="ic" style="left:598.5px;top:873px;color:#a3b0c9;stroke-width:1.8" width="20" height="20" viewBox="0 0 24 24"><path d="M14 2.500H7a2 2 0 0 0-2 2v15a2 2 0 0 0 2 2h10a2 2 0 0 0 2-2V7.500z"/><path d="M13.500 2.800v3.200a2 2 0 0 0 2 2h3.200M10.300 12.800L8.500 15l1.800 2.200M13.700 12.800l1.800 2.200-1.800 2.200"/></svg>
<span class="t" style="font-size:15.5px;line-height:17px;color:#a9b1c1;top:875px;letter-spacing:-0.273px;left:626.20px;">Libraries</span>
<div class="abs" style="left:692px;top:873px;width:24px;height:20px;border-radius:3px;background:#fb8f83"></div>
<span class="t" style="font-size:13.5px;line-height:15px;color:#3a1a16;top:876px;letter-spacing:-0.500px;left:696.50px;">10</span>
<div class="abs" style="left:737px;top:863px;width:167px;height:40px;border-radius:7px;border:1px solid #25282f"></div>
<span class="t" style="font-size:15.5px;line-height:17px;color:#a9b1c1;top:875px;letter-spacing:-0.344px;left:774.20px;">AI Debugger</span>
<span class="t" style="font-size:11px;line-height:12px;color:#ee6ddf;top:874px;font-weight:bold;letter-spacing:0.193px;left:865.00px;">NEW</span>
<span class="t" style="font-size:13px;line-height:15px;color:#eef1f6;top:920px;-webkit-text-stroke:0.26px currentColor;letter-spacing:0.104px;left:196.20px;">Timestamp</span>
<span class="t du" style="font-size:13px;line-height:15px;color:#a6c6fa;top:920px;letter-spacing:-0.009px;left:342.00px;">3/3/2026 10:29:09 PM</span>
<span class="t" style="font-size:13px;line-height:15px;color:#eef1f6;top:948px;-webkit-text-stroke:0.26px currentColor;letter-spacing:0.016px;left:196.20px;">Server Time</span>
<span class="t" style="font-size:13px;line-height:15px;color:#e3e6ec;top:948px;letter-spacing:-0.009px;left:342.00px;">3/3/2026 10:29:08 PM</span>
<span class="t" style="font-size:13px;line-height:15px;color:#eef1f6;top:976px;-webkit-text-stroke:0.26px currentColor;letter-spacing:-0.054px;left:196.20px;">Process Uptime</span>
<span class="t" style="font-size:13px;line-height:15px;color:#e3e6ec;top:976px;letter-spacing:0.014px;left:342.00px;">35.46 sec</span>
<div class="abs" style="left:1032px;top:918px;width:1px;height:84px;background:#2a2c33"></div>
<span class="t" style="font-size:13px;line-height:15px;color:#eef1f6;top:920px;-webkit-text-stroke:0.26px currentColor;letter-spacing:-0.049px;left:1067.40px;">Server</span>
<span class="t du" style="font-size:13px;line-height:15px;color:#a6c6fa;top:920px;letter-spacing:-0.045px;left:1212.30px;white-space:pre;">Node 20.20.0 </span>
<span class="t" style="font-size:13px;line-height:15px;color:#e3e6ec;top:920px;left:1293.50px;">(</span>
<span class="t du" style="font-size:13px;line-height:15px;color:#a6c6fa;top:920px;letter-spacing:-0.605px;left:1298.00px;">Raw</span>
<span class="t" style="font-size:13px;line-height:15px;color:#e3e6ec;top:920px;left:1322.40px;">)</span>
<span class="t" style="font-size:13px;line-height:15px;color:#eef1f6;top:948px;-webkit-text-stroke:0.26px currentColor;letter-spacing:-0.059px;left:1067.40px;">Operating System</span>
<span class="t" style="font-size:13px;line-height:15px;color:#e3e6ec;top:948px;letter-spacing:-0.163px;left:1212.60px;">Linux (x64) 6.17.0-14-generic</span>
<span class="t" style="font-size:13px;line-height:15px;color:#eef1f6;top:976px;-webkit-text-stroke:0.26px currentColor;letter-spacing:-0.233px;left:1067.40px;">Source IP</span>
<span class="t" style="font-size:13px;line-height:15px;color:#e3e6ec;top:976px;letter-spacing:-0.393px;left:1212.60px;">146.70.198.29 (Canada)</span>
</section>
</main>
</div>
</body>
</html>
